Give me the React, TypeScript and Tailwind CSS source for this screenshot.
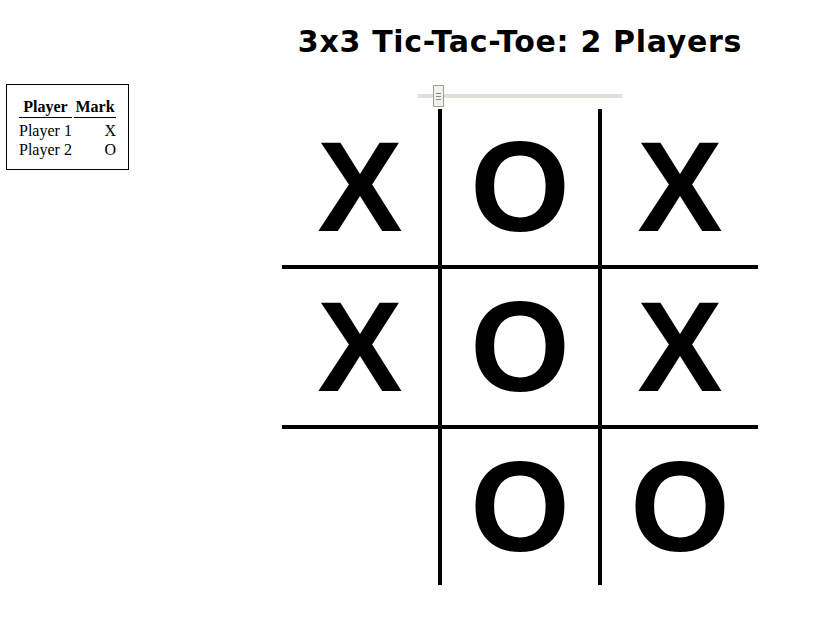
import React from "react";

const board = [
  ["X", "O", "X"],
  ["X", "O", "X"],
  ["", "O", "O"],
];

export default function App() {
  return (
    <div className="w-[835px] h-[631px] bg-white flex pl-[6px] overflow-hidden">
      <div className="w-[123px] shrink-0 self-start mt-[84px] border border-black pt-[13px] pb-[10px] pl-[12px] pr-[10px] text-black" style={{ fontFamily: '"Liberation Serif", "Times New Roman", serif' }}>
        <div className="grid grid-cols-[53px_42px] gap-x-[2px] text-[16px]">
          <div className="font-bold text-center leading-[18px] pb-px border-b border-black">Player</div>
          <div className="font-bold text-center leading-[18px] pb-px border-b border-black">Mark</div>
          <div className="leading-[19px] mt-[3px]">Player 1</div>
          <div className="leading-[19px] mt-[3px] text-right">X</div>
          <div className="leading-[19px]">Player 2</div>
          <div className="leading-[19px] text-right">O</div>
        </div>
      </div>
      <div className="ml-[153px] w-[476px] shrink-0 flex flex-col items-center">
        <h1 className="mt-[25px] text-[30px] leading-[34px] font-bold tracking-[0.7px] text-black whitespace-nowrap" style={{ fontFamily: '"DejaVu Sans", sans-serif' }}>
          3x3 Tic-Tac-Toe: 2 Players
        </h1>
        <div className="mt-[26px] relative w-[204px] h-[22px] flex items-center">
          <div className="w-full h-[4px] bg-[#e2dfda]" />
          <div className="absolute left-[15px] top-0 w-[11px] h-[22px] bg-[#f3f1ee] border border-[#a19c96] flex flex-col items-center justify-center gap-[2px]">
            <div className="w-[5px] h-px bg-[#8a857f]" />
            <div className="w-[5px] h-px bg-[#8a857f]" />
            <div className="w-[5px] h-px bg-[#8a857f]" />
          </div>
        </div>
        <div className="mt-[2px] grid grid-cols-[156px_156px_156px] grid-rows-[156px_156px_156px] gap-[4px] bg-black">
          {board.flat().map((m, i) => (
            <div key={i} className="bg-white flex items-center justify-center text-[128px] leading-none font-bold text-black" style={{ fontFamily: '"Liberation Sans", Arial, sans-serif' }}>
              {m}
            </div>
          ))}
        </div>
      </div>
    </div>
  );
}
